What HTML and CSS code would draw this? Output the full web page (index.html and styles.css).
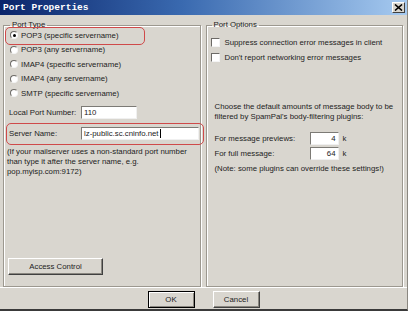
FILE: index.html
```html
<!DOCTYPE html>
<html lang="en">
<head>
    <meta charset="UTF-8">
    <title>Port Properties</title>
    <link rel="stylesheet" href="styles.css">
</head>
<body>
    <div class="window">
        <div class="titlebar">
            <span class="title">Port Properties</span>
            <span class="close-btn">
                <svg width="9" height="7" viewBox="0 0 9 7"><path d="M1 0.5 L8 6.5 M8 0.5 L1 6.5" stroke="#000" stroke-width="1.6"/></svg>
            </span>
        </div>

        <div class="panes">
            <fieldset class="group group-left">
                <legend>Port Type</legend>
                <div class="radio-list">
                    <div class="radio-row marked-first"><span class="radio checked"></span>POP3 (specific servername)</div>
                    <div class="radio-row"><span class="radio"></span>POP3 (any servername)</div>
                    <div class="radio-row"><span class="radio"></span>IMAP4 (specific servername)</div>
                    <div class="radio-row"><span class="radio"></span>IMAP4 (any servername)</div>
                    <div class="radio-row"><span class="radio"></span>SMTP (specific servername)</div>
                </div>

                <div class="field-row port-row">
                    <span class="field-label">Local Port Number:</span>
                    <span class="textbox port-box">110</span>
                </div>
                <div class="field-row server-row">
                    <span class="field-label">Server Name:</span>
                    <span class="textbox server-box">lz-public.sc.cninfo.net<span class="caret"></span></span>
                </div>

                <p class="help">(If your mailserver uses a non-standard port number<br>than type it after the server name, e.g.<br>pop.myisp.com:9172)</p>

                <div class="btn access-btn">Access Control</div>
            </fieldset>

            <fieldset class="group group-right">
                <legend>Port Options</legend>
                <div class="check-row first-check"><span class="checkbox"></span>Suppress connection error messages in client</div>
                <div class="check-row"><span class="checkbox"></span>Don't report networking error messages</div>

                <p class="choose">Choose the default amounts of message body to be<br>filtered by SpamPal's body-filtering plugins:</p>

                <div class="amount-row preview-row">
                    <span class="amount-label">For message previews:</span>
                    <span class="textbox amount-box">4</span>
                    <span class="unit">k</span>
                </div>
                <div class="amount-row full-row">
                    <span class="amount-label">For full message:</span>
                    <span class="textbox amount-box">64</span>
                    <span class="unit">k</span>
                </div>
                <p class="note">(Note: some plugins can override these settings!)</p>
            </fieldset>
        </div>

        <div class="button-row">
            <div class="btn default-btn">OK</div>
            <div class="btn">Cancel</div>
        </div>
    </div>
</body>
</html>
```

FILE: styles.css
```css
body {
    margin: 0;
    background: #d9d6cf;
    font-family: 'Liberation Sans', Arial, sans-serif;
    font-size: 7.8px;
    color: #222222;
}

.window {
    position: relative;
    width: 408px;
    height: 311px;
    box-sizing: border-box;
    display: flex;
    flex-direction: column;
    background: #d9d6cf;
    border-right: 1px solid #8a8780;
    border-bottom: 2px solid #3a3a3a;
    overflow: hidden;
}

/* title bar */
.titlebar {
    flex: none;
    height: 15px;
    display: flex;
    align-items: center;
    justify-content: space-between;
    padding: 0 2px 0 3px;
    background: linear-gradient(90deg, #0a246a 0%, #3a6ab0 45%, #a6caf0 100%);
}

.title {
    font-family: 'Liberation Mono', monospace;
    font-weight: bold;
    font-size: 9.5px;
    color: #ffffff;
}

.close-btn {
    width: 13px;
    height: 11px;
    box-sizing: border-box;
    display: flex;
    align-items: center;
    justify-content: center;
    background: #d9d6cf;
    border: 1px solid;
    border-color: #ffffff #404040 #404040 #ffffff;
}

/* two group boxes */
.panes {
    flex: 1;
    display: flex;
    gap: 5px;
    padding: 5px 4px 0 3px;
    min-height: 0;
}

.group {
    width: 198px;
    box-sizing: border-box;
    margin: 0;
    padding: 0 1px 11px 5px;
    min-width: 0;
    display: flex;
    flex-direction: column;
    border: 1px solid #9c988f;
    box-shadow: inset 1px 1px 0 #ffffff, 1px 1px 0 #ffffff;
}

.group legend {
    padding: 0 2px;
    margin-left: 1px;
    line-height: 10px;
    font-size: 7.8px;
}

.group-right {
    padding-left: 4px;
}

/* radios */
.radio-list {
    display: flex;
    flex-direction: column;
    gap: 4.5px;
}

.radio-row {
    position: relative;
    height: 10px;
    display: flex;
    align-items: center;
    white-space: nowrap;
}

.radio {
    width: 8px;
    height: 8px;
    box-sizing: border-box;
    margin: 0 3px 0 1px;
    border-radius: 50%;
    background: #ffffff;
    border: 1px solid;
    border-color: #6c6a66 #f4f4f4 #f4f4f4 #6c6a66;
    display: flex;
    align-items: center;
    justify-content: center;
}

.radio.checked::before {
    content: "";
    width: 3px;
    height: 3px;
    border-radius: 50%;
    background: #000000;
}

.marked-first::after {
    content: "";
    position: absolute;
    left: -4px;
    top: -3px;
    width: 138px;
    height: 16px;
    border: 1px solid #cf4a4a;
    border-radius: 5px;
}

/* label + textbox rows */
.field-row {
    position: relative;
    height: 13px;
    display: flex;
    align-items: center;
}

.port-row {
    margin-top: 8px;
}

.server-row {
    margin-top: 8px;
}

.server-row::after {
    content: "";
    position: absolute;
    left: -3px;
    top: -4px;
    right: -5px;
    bottom: -5px;
    border: 1px solid #cf4a4a;
    border-radius: 5px;
}

.field-label {
    width: 72px;
    flex: none;
    white-space: nowrap;
}

.textbox {
    height: 13px;
    box-sizing: border-box;
    display: flex;
    align-items: center;
    padding: 0 2px;
    background: #ffffff;
    border: 1px solid;
    border-color: #7c7a75 #f0f0f0 #f0f0f0 #7c7a75;
    white-space: nowrap;
}

.port-box {
    width: 56px;
}

.server-box {
    width: 119px;
}

.caret {
    width: 0;
    height: 9px;
    border-left: 1px solid #000000;
    margin-left: 1px;
}

.help {
    margin: 7px 0 0 -2px;
    line-height: 10px;
}

/* buttons */
.btn {
    width: 47px;
    height: 17px;
    box-sizing: border-box;
    display: flex;
    align-items: center;
    justify-content: center;
    background: #d9d6cf;
    border: 1px solid;
    border-color: #ffffff #404040 #404040 #ffffff;
    box-shadow: inset -1px -1px 0 #8a8780;
}

.access-btn {
    width: 95px;
    margin: auto 0 0 -1px;
}

.default-btn {
    border: 1px solid #000000;
    box-shadow: inset 1px 1px 0 #ffffff, inset -1px -1px 0 #8a8780;
}

.button-row {
    flex: none;
    height: 22px;
    box-sizing: border-box;
    padding-top: 3px;
    display: flex;
    justify-content: center;
    gap: 18px;
    border-top: 1px solid #ffffff;
}

/* port options */
.check-row {
    height: 10px;
    display: flex;
    align-items: center;
    margin-top: 5px;
    white-space: nowrap;
}

.first-check {
    margin-top: 7px;
}

.checkbox {
    width: 9px;
    height: 9px;
    box-sizing: border-box;
    margin-right: 5px;
    background: #ffffff;
    border: 1px solid;
    border-color: #6c6a66 #f4f4f4 #f4f4f4 #6c6a66;
}

.choose {
    margin: 40px 0 0 4px;
    line-height: 10px;
}

.amount-row {
    height: 13px;
    display: flex;
    align-items: center;
    margin-left: 4px;
}

.preview-row {
    margin-top: 10px;
}

.full-row {
    margin-top: 2px;
}

.amount-label {
    width: 95px;
    flex: none;
}

.amount-box {
    width: 29px;
    justify-content: flex-end;
}

.unit {
    margin-left: 4px;
}

.note {
    margin: 4px 0 0 4px;
    line-height: 10px;
}
```
